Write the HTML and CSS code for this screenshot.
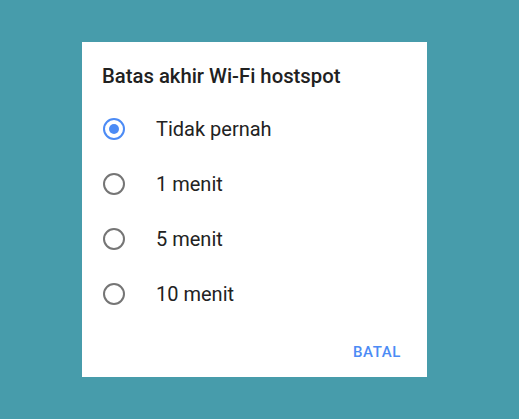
FILE: index.html
```html
<!DOCTYPE html>
<html>
<head>
<meta charset="utf-8">
<link rel="stylesheet" href="styles.css">
</head>
<body>
<div class="dialog">
  <div class="title">Batas akhir Wi-Fi hostspot</div>
  <div class="options">
    <div class="option"><span class="radio checked"></span><span class="label">Tidak pernah</span></div>
    <div class="option"><span class="radio"></span><span class="label">1 menit</span></div>
    <div class="option"><span class="radio"></span><span class="label">5 menit</span></div>
    <div class="option"><span class="radio"></span><span class="label">10 menit</span></div>
  </div>
  <div class="actions"><span class="btn">BATAL</span></div>
</div>
</body>
</html>
```
FILE: styles.css
```css
html, body {
  margin: 0;
  padding: 0;
}
body {
  background: #479cab;
  width: 519px;
  height: 419px;
  padding: 42px 0 0 82px;
  box-sizing: border-box;
  font-family: Roboto, "Noto Sans", sans-serif;
}
.dialog {
  width: 345px;
  height: 335px;
  background: #fff;
  box-sizing: border-box;
  padding: 0 0 0 20px;
  display: flex;
  flex-direction: column;
}
.title {
  font-size: 20.3px;
  font-weight: 500;
  color: #212121;
  line-height: 24px;
  margin-top: 22px;
}
.options {
  margin-top: 13px;
  display: flex;
  flex-direction: column;
}
.option {
  height: 55px;
  display: flex;
  align-items: center;
}
.radio {
  width: 22px;
  height: 22px;
  box-sizing: border-box;
  border: 2px solid #757575;
  border-radius: 50%;
  margin-left: 1px;
  display: flex;
  align-items: center;
  justify-content: center;
}
.radio.checked {
  border-color: #4c8bf5;
}
.radio.checked::after {
  content: "";
  width: 10px;
  height: 10px;
  border-radius: 50%;
  background: #4c8bf5;
}
.label {
  margin-left: 31px;
  font-size: 20px;
  color: #222;
}
.actions {
  display: flex;
  justify-content: flex-end;
  margin-top: auto;
  padding: 0 26px 16px 0;
}
.btn {
  font-size: 15px;
  font-weight: 500;
  color: #4c8bf5;
  letter-spacing: 0.6px;
}
```
